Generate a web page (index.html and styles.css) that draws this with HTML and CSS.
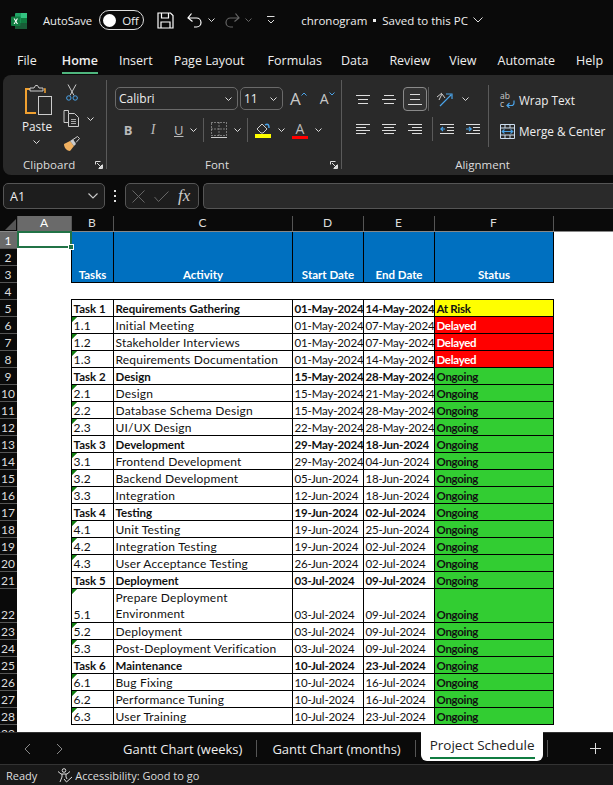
FILE: index.html
```html
<!DOCTYPE html>
<html lang="en">
<head>
<meta charset="utf-8">
<title>chronogram - Excel</title>
<link rel="stylesheet" href="styles.css">
</head>
<body>
<header class="titlebar">
  <svg class="logo" width="16" height="16" viewBox="0 0 16 16"><rect x="4" y="0" width="12" height="16" rx="1" fill="#21a366"/><rect x="10" y="0" width="6" height="5" fill="#33c481"/><rect x="10" y="5" width="6" height="5" fill="#107c41"/><rect x="4" y="10" width="12" height="6" fill="#185c37"/><rect x="0" y="3.5" width="9.5" height="9.5" rx="1" fill="#107c41"/><path d="M2.6 5.6h1.2l1 1.7 1-1.7H7L5.5 8.2 7 10.9H5.8l-1-1.8-1 1.8H2.6l1.600-2.700z" fill="#fff"/></svg>
  <span class="autosave">AutoSave</span>
  <span class="toggle"><i class="knob"></i><span>Off</span></span>
  <svg class="ico save" width="17" height="17" viewBox="0 0 17 17" fill="none" stroke="#fff" stroke-width="1.200"><path d="M1 1h12.500L16 3.500V16H1z"/><path d="M4.500 1v5h7V1M4 16v-6h9v6"/></svg>
  <svg class="ico undo" width="15" height="17" viewBox="0 0 15 17" fill="none" stroke="#fff" stroke-width="1.200"><path d="M1 6h8.500a4.500 4.500 0 0 1 0 9H7M4.500 1.500 1 6l4.500 3.500"/></svg>
  <svg class="chev c-undo" width="7" height="4" viewBox="0 0 7 4"><path d="M.5.5l3 3 3-3" fill="none" stroke="#ddd"/></svg>
  <svg class="ico redo" width="15" height="17" viewBox="0 0 15 17" fill="none" stroke="#666" stroke-width="1.200"><path d="M14 6H5.500a4.500 4.500 0 0 0 0 9H8M10.500 1.500 14 6l-4.500 3.500"/></svg>
  <svg class="chev c-redo" width="7" height="4" viewBox="0 0 7 4"><path d="M.5.5l3 3 3-3" fill="none" stroke="#666"/></svg>
  <svg class="ico custom" width="8" height="8" viewBox="0 0 8 8" fill="none" stroke="#ddd"><path d="M0 .5h7.500M1 4l3 3 3-3"/></svg>
  <span class="doc">chronogram</span><i class="dot"></i><span class="saved">Saved to this PC</span>
  <svg class="chev c-doc" width="10" height="6" viewBox="0 0 10 6"><path d="M.5.5l4.500 4.500L9.500.5" fill="none" stroke="#ddd"/></svg>
</header>

<nav class="menu">
  <span class="m-file">File</span><span class="on">Home</span><span>Insert</span><span class="m-page">Page Layout</span><span class="m-form">Formulas</span><span>Data</span><span class="m-rev">Review</span><span>View</span><span class="m-view">Automate</span><span>Help</span>
</nav>

<section class="ribbon">
  <div class="grp g-clip">
    <div class="body clip-body">
      <div class="paste">
        <svg width="28" height="32" viewBox="0 0 28 32" fill="none"><path d="M8 5H1v24h10" stroke="#f0a030" stroke-width="2"/><path d="M19 5h1v4" stroke="#f0a030" stroke-width="1.500"/><path d="M5 7V4h4l1.500-2.500h2L14 4h4v3z" stroke="#ccc" fill="#292929"/><rect x="13.500" y="12.500" width="13" height="18" stroke="#ccc" fill="#292929"/></svg>
        <span>Paste</span>
        <svg class="small-chev" width="7" height="4" viewBox="0 0 7 4"><path d="M.5.5l3 3 3-3" fill="none" stroke="#ddd"/></svg>
      </div>
      <div class="tools">
        <svg width="12" height="17" viewBox="0 0 12 17" fill="none"><path d="M2 .5l6 11M10 .5l-6 11" stroke="#ccc"/><circle cx="2.800" cy="14" r="2.200" stroke="#4aa3e8"/><circle cx="9.200" cy="14" r="2.200" stroke="#4aa3e8"/></svg>
        <span class="copy"><svg width="17" height="17" viewBox="0 0 17 17" fill="none" stroke="#ccc"><path d="M5.500 3V.5H1v12h4.500"/><path d="M5.500 3.500h6l4 4v9h-10z"/><path d="M8 9.500h5M8 11.500h5M8 13.500h5" stroke-width=".8"/></svg><svg width="7" height="4" viewBox="0 0 7 4"><path d="M.5.5l3 3 3-3" fill="none" stroke="#ddd"/></svg></span>
        <svg width="17" height="16" viewBox="0 0 17 16"><path d="M1 8l6-3 4 5-4 5c-3 0-6-3-6-7z" fill="#f0b060"/><path d="M7 5l3-2 3 5-2 2z" fill="#ccc"/><path d="M10 3.500l4.500-3 2 2-3.500 4" fill="none" stroke="#ccc"/></svg>
      </div>
    </div>
    <div class="label"><span>Clipboard</span>
      <svg class="launch" width="8" height="8" viewBox="0 0 8 8" fill="none" stroke="#ddd"><path d="M7.500 3.500v4h-4M.5 3.500v-3h5M2 2l4.500 4.500M4 6.500h2.500V4"/></svg></div>
  </div>

  <div class="grp g-font">
    <div class="body font-body">
      <div class="frow r1">
        <div class="box fname"><span>Calibri</span><svg width="7" height="4" viewBox="0 0 7 4"><path d="M.5.5l3 3 3-3" fill="none" stroke="#ddd"/></svg></div>
        <div class="box fsize"><span>11</span><svg width="7" height="4" viewBox="0 0 7 4"><path d="M.5.5l3 3 3-3" fill="none" stroke="#ddd"/></svg></div>
        <span class="grow">A<svg width="6" height="4" viewBox="0 0 6 4"><path d="M.5 3.500L3 1l2.500 2.500" fill="none" stroke="#4aa3e8"/></svg></span>
        <span class="shrink">A<svg width="6" height="4" viewBox="0 0 6 4"><path d="M.5.5L3 3 5.500.5" fill="none" stroke="#4aa3e8"/></svg></span>
      </div>
      <div class="frow r2">
        <b class="fb">B</b><i class="fi">I</i><u class="fu">U</u>
        <svg class="chv" width="7" height="4" viewBox="0 0 7 4"><path d="M.5.5l3 3 3-3" fill="none" stroke="#ddd"/></svg>
        <i class="sep"></i>
        <svg width="16" height="16" viewBox="0 0 16 16" fill="none" stroke="#ccc"><path d="M.5 .5h15v13H.5zM8 .5v13M.5 7h15" stroke-dasharray="1 2"/><path d="M0 15.500h16"/></svg>
        <svg class="chv" width="7" height="4" viewBox="0 0 7 4"><path d="M.5.5l3 3 3-3" fill="none" stroke="#ddd"/></svg>
        <i class="sep"></i>
        <svg width="16" height="16" viewBox="0 0 16 16"><path d="M2 7l5-5 5 5-4 4H6z" fill="none" stroke="#ccc"/><path d="M10 3c3-2 4 0 4 3" fill="none" stroke="#4aa3e8" stroke-width="1.500"/><rect y="12" width="16" height="4" fill="#ff0"/></svg>
        <svg class="chv" width="7" height="4" viewBox="0 0 7 4"><path d="M.5.5l3 3 3-3" fill="none" stroke="#ddd"/></svg>
        <span class="fcolor">A</span>
        <svg class="chv" width="7" height="4" viewBox="0 0 7 4"><path d="M.5.5l3 3 3-3" fill="none" stroke="#ddd"/></svg>
      </div>
    </div>
    <div class="label l-font"><span>Font</span>
      <svg class="launch" width="8" height="8" viewBox="0 0 8 8" fill="none" stroke="#ddd"><path d="M7.500 3.500v4h-4M.5 3.500v-3h5M2 2l4.500 4.500M4 6.500h2.500V4"/></svg></div>
  </div>

  <div class="grp g-align">
    <div class="body align-body">
      <div class="aligns">
        <div class="arow">
          <svg width="14" height="9" viewBox="0 0 14 9" stroke="#ddd"><path d="M0 .5h14M2 4.500h10M2 8.500h10"/></svg>
          <svg width="14" height="9" viewBox="0 0 14 9" stroke="#ddd"><path d="M2 .5h10M0 4.500h14M2 8.500h10"/></svg>
          <span class="a-on"><svg width="14" height="11" viewBox="0 0 14 11" stroke="#ddd"><path d="M2 .5h10M2 5.500h10M0 10.500h14"/></svg></span>
          <i class="sep"></i>
          <svg width="17" height="16" viewBox="0 0 17 16" fill="none"><path d="M1 6l5-4M3 9l3-6 3 4" stroke="#ccc"/><path d="M4 15L15 4M10 3h6v5" stroke="#4aa3e8" stroke-width="1.200"/></svg>
          <svg class="chv" width="7" height="4" viewBox="0 0 7 4"><path d="M.5.5l3 3 3-3" fill="none" stroke="#ddd"/></svg>
        </div>
        <div class="arow">
          <svg width="14" height="11" viewBox="0 0 14 11" stroke="#ddd"><path d="M0 .5h14M0 3.500h10M0 6.500h14M0 9.500h10"/></svg>
          <svg width="14" height="11" viewBox="0 0 14 11" stroke="#ddd"><path d="M0 .5h14M2 3.500h10M0 6.500h14M2 9.500h10"/></svg>
          <svg class="a-r" width="14" height="11" viewBox="0 0 14 11" stroke="#ddd"><path d="M0 .5h14M4 3.500h10M0 6.500h14M4 9.500h10"/></svg>
          <i class="sep"></i>
          <svg width="14" height="11" viewBox="0 0 14 11" fill="none"><path d="M0 .5h14M7 3.500h7M7 6.500h7M0 9.500h14" stroke="#ddd"/><path d="M5 5H.5M3 3L.8 5 3 7" stroke="#4aa3e8" stroke-width="1.200"/></svg>
          <svg width="14" height="11" viewBox="0 0 14 11" fill="none"><path d="M0 .5h14M7 3.500h7M7 6.500h7M0 9.500h14" stroke="#ddd"/><path d="M0 5h5M3 3l2.200 2L3 7" stroke="#4aa3e8" stroke-width="1.200"/></svg>
        </div>
      </div>
      <i class="vr"></i>
      <div class="wraps">
        <div class="wline"><span class="wrapico"><span>ab</span><span>c</span><svg width="9" height="8" viewBox="0 0 9 8" fill="none"><path d="M8 .5v2.500a2.500 2.500 0 0 1-2.500 2.500H1M3.500 3L1 5.500 3.500 8" stroke="#4aa3e8" stroke-width="1.200"/></svg></span><span>Wrap Text</span></div>
        <div class="wline"><svg width="15" height="15" viewBox="0 0 15 15" fill="none"><path d="M.5.5h14v14H.5zM.5 4h14M.5 11h14" stroke="#cde"/><path d="M5 .5V4M10 .5V4M5 11v3.500M10 11v3.500" stroke="#cde"/><path d="M2 7.500h11M4.500 5.500l-2.300 2 2.300 2M10.500 5.500l2.300 2-2.300 2" stroke="#4aa3e8" stroke-width="1.100"/></svg><span>Merge &amp; Center</span></div>
      </div>
    </div>
    <div class="label l-align"><span>Alignment</span></div>
  </div>
</section>

<section class="fbar">
  <div class="fld namebox"><span>A1</span><svg width="10" height="6" viewBox="0 0 10 6"><path d="M.5.5l4.500 4.500L9.500.5" fill="none" stroke="#ccc" stroke-width="1.100"/></svg></div>
  <div class="dots"><i></i><i></i><i></i></div>
  <div class="fld fxbox">
    <svg width="13" height="13" viewBox="0 0 13 13"><path d="M.5.5l12 12M12.500.5l-12 12" stroke="#666"/></svg>
    <svg width="15" height="11" viewBox="0 0 15 11"><path d="M.5 6l4 4.500L14.500.5" fill="none" stroke="#666"/></svg>
    <span class="fx">fx</span>
  </div>
  <div class="fld finput"></div>
</section>

<main class="sheet">
<table class="grid">
  <colgroup><col class="w-h"><col class="w-a"><col class="w-b"><col class="w-c"><col class="w-d"><col class="w-e"><col class="w-f"><col class="w-g"></colgroup>
  <thead>
    <tr class="cols"><th class="corner"><svg width="11" height="11" viewBox="0 0 11 11"><path d="M11 0v11H0z" fill="#555"/></svg></th><th class="ch ch-on">A</th><th class="ch">B</th><th class="ch">C</th><th class="ch">D</th><th class="ch">E</th><th class="ch">F</th><th class="ch">G</th></tr>
  </thead>
  <tbody>
    <tr><th class="rh rh-on">1</th><td class="sel"><span class="cursor"><i class="handle"></i></span></td><td class="hd" rowspan="3">Tasks</td><td class="hd" rowspan="3">Activity</td><td class="hd" rowspan="3">Start Date</td><td class="hd" rowspan="3">End Date</td><td class="hd" rowspan="3">Status</td><td class="e"></td></tr>
    <tr><th class="rh">2</th><td class="e"></td><td class="e"></td></tr>
    <tr><th class="rh">3</th><td class="e"></td><td class="e"></td></tr>
    <tr><th class="rh">4</th><td class="e"></td><td class="e" colspan="5"></td><td class="e"></td></tr>
    <tr class="task"><th class="rh">5</th><td class="e"></td><td>Task 1</td><td>Requirements Gathering</td><td class="dt">01-May-2024</td><td class="dt">14-May-2024</td><td class="risk">At Risk</td><td class="e"></td></tr>
    <tr><th class="rh">6</th><td class="e"></td><td class="n">1.1</td><td>Initial Meeting</td><td class="dt">01-May-2024</td><td class="dt">07-May-2024</td><td class="late">Delayed</td><td class="e"></td></tr>
    <tr><th class="rh">7</th><td class="e"></td><td class="n">1.2</td><td>Stakeholder Interviews</td><td class="dt">01-May-2024</td><td class="dt">07-May-2024</td><td class="late">Delayed</td><td class="e"></td></tr>
    <tr><th class="rh">8</th><td class="e"></td><td class="n">1.3</td><td>Requirements Documentation</td><td class="dt">01-May-2024</td><td class="dt">14-May-2024</td><td class="late">Delayed</td><td class="e"></td></tr>
    <tr class="task"><th class="rh">9</th><td class="e"></td><td>Task 2</td><td>Design</td><td class="dt">15-May-2024</td><td class="dt">28-May-2024</td><td class="go">Ongoing</td><td class="e"></td></tr>
    <tr><th class="rh">10</th><td class="e"></td><td class="n">2.1</td><td>Design</td><td class="dt">15-May-2024</td><td class="dt">21-May-2024</td><td class="go">Ongoing</td><td class="e"></td></tr>
    <tr><th class="rh">11</th><td class="e"></td><td class="n">2.2</td><td>Database Schema Design</td><td class="dt">15-May-2024</td><td class="dt">28-May-2024</td><td class="go">Ongoing</td><td class="e"></td></tr>
    <tr><th class="rh">12</th><td class="e"></td><td class="n">2.3</td><td>UI/UX Design</td><td class="dt">22-May-2024</td><td class="dt">28-May-2024</td><td class="go">Ongoing</td><td class="e"></td></tr>
    <tr class="task"><th class="rh">13</th><td class="e"></td><td>Task 3</td><td>Development</td><td class="dt">29-May-2024</td><td class="dt">18-Jun-2024</td><td class="go">Ongoing</td><td class="e"></td></tr>
    <tr><th class="rh">14</th><td class="e"></td><td class="n">3.1</td><td>Frontend Development</td><td class="dt">29-May-2024</td><td class="dt">04-Jun-2024</td><td class="go">Ongoing</td><td class="e"></td></tr>
    <tr><th class="rh">15</th><td class="e"></td><td class="n">3.2</td><td>Backend Development</td><td class="dt">05-Jun-2024</td><td class="dt">18-Jun-2024</td><td class="go">Ongoing</td><td class="e"></td></tr>
    <tr><th class="rh">16</th><td class="e"></td><td class="n">3.3</td><td>Integration</td><td class="dt">12-Jun-2024</td><td class="dt">18-Jun-2024</td><td class="go">Ongoing</td><td class="e"></td></tr>
    <tr class="task"><th class="rh">17</th><td class="e"></td><td>Task 4</td><td>Testing</td><td class="dt">19-Jun-2024</td><td class="dt">02-Jul-2024</td><td class="go">Ongoing</td><td class="e"></td></tr>
    <tr><th class="rh">18</th><td class="e"></td><td class="n">4.1</td><td>Unit Testing</td><td class="dt">19-Jun-2024</td><td class="dt">25-Jun-2024</td><td class="go">Ongoing</td><td class="e"></td></tr>
    <tr><th class="rh">19</th><td class="e"></td><td class="n">4.2</td><td>Integration Testing</td><td class="dt">19-Jun-2024</td><td class="dt">02-Jul-2024</td><td class="go">Ongoing</td><td class="e"></td></tr>
    <tr><th class="rh">20</th><td class="e"></td><td class="n">4.3</td><td>User Acceptance Testing</td><td class="dt">26-Jun-2024</td><td class="dt">02-Jul-2024</td><td class="go">Ongoing</td><td class="e"></td></tr>
    <tr class="task"><th class="rh">21</th><td class="e"></td><td>Task 5</td><td>Deployment</td><td class="dt">03-Jul-2024</td><td class="dt">09-Jul-2024</td><td class="go">Ongoing</td><td class="e"></td></tr>
    <tr class="tall"><th class="rh">22</th><td class="e"></td><td class="n">5.1</td><td class="wrapc">Prepare Deployment<br>Environment</td><td class="dt">03-Jul-2024</td><td class="dt">09-Jul-2024</td><td class="go">Ongoing</td><td class="e"></td></tr>
    <tr><th class="rh">23</th><td class="e"></td><td class="n">5.2</td><td>Deployment</td><td class="dt">03-Jul-2024</td><td class="dt">09-Jul-2024</td><td class="go">Ongoing</td><td class="e"></td></tr>
    <tr><th class="rh">24</th><td class="e"></td><td class="n">5.3</td><td>Post-Deployment Verification</td><td class="dt">03-Jul-2024</td><td class="dt">09-Jul-2024</td><td class="go">Ongoing</td><td class="e"></td></tr>
    <tr class="task"><th class="rh">25</th><td class="e"></td><td>Task 6</td><td>Maintenance</td><td class="dt">10-Jul-2024</td><td class="dt">23-Jul-2024</td><td class="go">Ongoing</td><td class="e"></td></tr>
    <tr><th class="rh">26</th><td class="e"></td><td class="n">6.1</td><td>Bug Fixing</td><td class="dt">10-Jul-2024</td><td class="dt">16-Jul-2024</td><td class="go">Ongoing</td><td class="e"></td></tr>
    <tr><th class="rh">27</th><td class="e"></td><td class="n">6.2</td><td>Performance Tuning</td><td class="dt">10-Jul-2024</td><td class="dt">16-Jul-2024</td><td class="go">Ongoing</td><td class="e"></td></tr>
    <tr><th class="rh">28</th><td class="e"></td><td class="n">6.3</td><td>User Training</td><td class="dt">10-Jul-2024</td><td class="dt">23-Jul-2024</td><td class="go">Ongoing</td><td class="e"></td></tr>
    <tr><th class="rh">29</th><td class="e" colspan="7"></td></tr>
  </tbody>
</table>
</main>

<footer class="tabbar">
  <svg class="nav n-l" width="7" height="12" viewBox="0 0 7 12"><path d="M6 1L1 6l5 5" fill="none" stroke="#888"/></svg>
  <svg class="nav n-r" width="7" height="12" viewBox="0 0 7 12"><path d="M1 1l5 5-5 5" fill="none" stroke="#888"/></svg>
  <span class="tab t1">Gantt Chart (weeks)</span><i class="tsep"></i>
  <span class="tab t2">Gantt Chart (months)</span><i class="tsep"></i>
  <span class="tab active"><span>Project Schedule</span></span><i class="tsep"></i>
  <svg class="plus" width="11" height="11" viewBox="0 0 11 11"><path d="M5.500 0v11M0 5.500h11" stroke="#ddd"/></svg>
</footer>
<footer class="status">
  <span class="ready">Ready</span>
  <svg width="16" height="15" viewBox="0 0 16 15" fill="none" stroke="#ddd"><circle cx="7" cy="2.500" r="1.800"/><path d="M1 3.500l3 2.500h6l3-2.500M5 6v3L3 14M9 6v3l1 2M7 11l2.500 3L15 9"/></svg>
  <span class="acc">Accessibility: Good to go</span>
</footer>
</body>
</html>
```
FILE: styles.css
```css
* { box-sizing: border-box; }
html, body { margin: 0; height: 100%; }
body {
  width: 613px; height: 785px; overflow: hidden;
  background: #0a0a0a; color: #eee;
  font-family: "Open Sans", "Noto Sans", sans-serif;
  font-size: 12.5px;
  display: flex; flex-direction: column;
}
i { font-style: normal; }

/* title bar */
.titlebar { height: 40px; flex: none; display: flex; align-items: center; padding-left: 11px; }
.logo { margin-top: 1px; }
.autosave { margin-left: 16px; font-size: 11.250px; }
.toggle {
  margin-left: 7px; width: 45px; height: 20px; border: 1px solid #ddd; border-radius: 10px;
  display: flex; align-items: center; padding-left: 3px; gap: 6px; font-size: 11.500px;
}
.knob { width: 13px; height: 13px; border-radius: 50%; background: #fff; }
.save { margin-left: 13px; }
.undo { margin-left: 13px; }
.c-undo { margin-left: 6px; }
.redo { margin-left: 10px; }
.c-redo { margin-left: 5px; }
.custom { margin-left: 15px; }
.doc { margin-left: 26px; font-size: 11.500px; }
.dot { width: 3px; height: 3px; background: #eee; margin-left: 6px; }
.saved { margin-left: 6px; font-size: 11.500px; }
.c-doc { margin-left: 5px; }

/* menu */
.menu { height: 35px; flex: none; display: flex; align-items: flex-start; padding: 12px 0 0 17px; gap: 21px; font-size: 12.500px; }
.menu .m-file { margin-right: 4px; }
.menu .m-page { margin-right: 2px; }
.menu .m-form { margin-right: -2px; }
.menu .m-rev { margin-left: 0; margin-right: -2px; }
.menu .on { font-weight: 600; padding-bottom: 3px; border-bottom: 2px solid #4fb67e; }

/* ribbon */
.ribbon {
  flex: none; height: 100px; margin-left: 3px; background: #292929; border-radius: 8px 0 0 8px;
  display: flex; padding-top: 5px; overflow: hidden;
}
.grp { display: flex; flex-direction: column; border-right: 1px solid #5a5a5a; height: 89px; }
.g-clip { width: 104px; }
.g-font { width: 235px; }
.g-align { border-right: 0; flex: 1; }
.body { height: 77px; flex: none; }
.label { height: 17px; display: flex; align-items: center; justify-content: center; position: relative; font-size: 11.500px; color: #ddd; }
.g-clip .label { justify-content: flex-start; padding-left: 20px; }
.l-font { padding-right: 14px; }
.l-align { padding-left: 10px; }
.launch { position: absolute; right: 3px; top: 4px; }

.clip-body { display: flex; padding-top: 4px; }
.paste { width: 54px; padding-left: 22px; display: flex; flex-direction: column; align-items: flex-start; }
.paste span { margin: 2px 0 0 -3px; font-size: 11.750px; line-height: 16px; }
.small-chev { margin: 6px 0 0 8px; }
.tools { display: flex; flex-direction: column; align-items: flex-start; gap: 9px; margin-left: 6px; }
.tools > svg:first-child { margin-left: 3px; }
.copy { display: flex; align-items: center; gap: 7px; }

.font-body { padding: 7px 0 0 8px; }
.frow { display: flex; align-items: center; }
.r1 { height: 23px; }
.box { height: 23px; border: 1px solid #6a6a6a; border-radius: 5px; display: flex; align-items: center; justify-content: space-between; padding: 0 5px 0 3px; font-size: 12px; background: #292929; }
.fname { width: 123px; }
.fsize { width: 43px; margin-left: 2px; }
.grow, .shrink { display: flex; color: #c8c8c8; align-items: flex-start; line-height: 18px; }
.grow { margin-left: 7px; font-size: 17px; }
.grow svg, .shrink svg { margin-top: 2px; }
.shrink { margin-left: 13px; font-size: 14px; }
.r2 { margin-top: 8px; height: 24px; padding-left: 8px; }
.fb, .fi, .fu { color: #bbb; font-size: 13px; text-align: center; }
.fb { width: 10px; }
.fi { margin-left: 16px; width: 8px; font-family: "Liberation Serif", serif; font-size: 14px; font-style: italic; }
.fu { margin-left: 17px; width: 9px; }
.chv { margin-left: 7px; flex: none; }
.sep { width: 1px; height: 24px; background: #5a5a5a; margin: 0 7px 0 6px; flex: none; }
.fcolor { margin-left: 7px; width: 16px; text-align: center; color: #bbb; font-size: 14px; line-height: 15px; border-bottom: 3px solid #f00; }

.align-body { display: flex; }
.aligns { padding: 7px 0 0 14px; width: 146px; }
.arow { display: flex; align-items: center; gap: 12px; height: 24px; }
.arow + .arow { margin-top: 6px; }
.a-on { margin-left: -5px; width: 24px; height: 24px; border: 1px solid #8a8a8a; border-radius: 4px; display: flex; align-items: center; justify-content: center; background: #333; }
.arow .sep { margin: 0 -5px 0 -10px; }
.arow .a-on + .sep { margin-left: -11px; margin-right: -5px; }
.a-r { margin-right: 8px; }
.arow .chv { margin-left: -3px; }
.vr { width: 1px; height: 62px; background: #5a5a5a; margin-top: 5px; flex: none; }
.wraps { padding: 9px 0 0 11px; white-space: nowrap; }
.wline { display: flex; align-items: center; gap: 4px; height: 22px; font-size: 11.750px; }
.wline + .wline { margin-top: 9px; }
.wrapico { width: 15px; height: 16px; position: relative; display: flex; flex-direction: column; font-size: 8.500px; line-height: 8px; color: #ccc; }
.wrapico svg { position: absolute; right: 0; bottom: 0; }

/* formula bar */
.fbar { flex: none; height: 41px; padding: 8px 0 7px 3px; display: flex; gap: 4px; }
.fld { height: 26px; border: 1px solid #555; border-radius: 5px; }
.namebox { width: 102px; display: flex; align-items: center; justify-content: space-between; padding: 0 6px; font-size: 12.500px; background: #1d1d1d; }
.dots { width: 12px; display: flex; flex-direction: column; align-items: center; justify-content: center; gap: 3px; }
.dots i { width: 2px; height: 2px; background: #ddd; }
.fxbox { width: 74px; display: flex; align-items: center; padding-left: 6px; gap: 9px; background: #1d1d1d; }
.fx { font-family: "Liberation Serif", serif; font-style: italic; font-size: 17px; color: #ccc; }
.finput { flex: 1; background: #2a2a2a; border-right: 0; border-radius: 5px 0 0 5px; }

/* sheet */
.sheet { flex: none; height: 516px; overflow: hidden; background: #fff; }
.grid { border-collapse: collapse; table-layout: fixed; width: 791px; font-family: Lato, "Liberation Sans", sans-serif; font-size: 12px; color: #111; margin-left: -1px; }
.w-h { width: 18px; } .w-a { width: 54px; } .w-b { width: 42px; } .w-c { width: 179px; }
.w-d { width: 71px; } .w-e { width: 71px; } .w-f { width: 119px; } .w-g { width: 237px; }
tr { height: 17px; }
.tall { height: 34px; }
.cols { height: 15px; }
th { font-weight: 400; background: #0a0a0a; color: #ddd; padding: 0; line-height: 14px; }
.corner { text-align: right; vertical-align: bottom; padding: 0 1px 1px 0; border-bottom: 1px solid #888; }
.corner svg { display: block; margin-left: auto; }
.ch { border-left: 1px solid #555; border-bottom: 1px solid #888; }
.ch-on { background: #6a6a6a; color: #fff; }
.rh { vertical-align: bottom; border-bottom: 1px solid #555; font-size: 12px; }
.rh-on { background: #6a6a6a; color: #fff; }
td {
  padding: 0 1px 0 2px; border: 1px solid #000; line-height: 15px; vertical-align: bottom;
  white-space: nowrap; overflow: hidden; letter-spacing: .2px;
}
td.e { border: 0; }
td.sel { border: 0; position: relative; overflow: visible; }
.cursor { position: absolute; left: 0; right: -1px; top: -1px; bottom: 0; border: 2px solid #217346; }
.handle { position: absolute; right: -4px; bottom: -4px; width: 6px; height: 6px; background: #217346; border: 1px solid #fff; }
.hd { background: #0070c0; color: #fff; font-weight: 700; text-align: center; font-size: 11.500px; letter-spacing: 0; }
.dt { font-size: 11.500px; letter-spacing: -.15px; }
.wrapc { line-height: 16px; }
.task td { font-weight: 700; font-size: 11.500px; letter-spacing: 0; }
.task td.dt { letter-spacing: -.2px; }
.task td.e { font-weight: 400; }
.n { background: linear-gradient(135deg, #107c10 3.500px, transparent 3.600px) no-repeat 0 0 / 6px 6px; }
td.risk, td.late, td.go { font-weight: 700; font-size: 11.500px; letter-spacing: -.3px; }
.risk { background: #ff0; }
.late { background: #f00; color: #fff; }
.go { background: #32cd32; }

/* sheet tabs */
.tabbar { flex: none; height: 32px; display: flex; align-items: center; padding-left: 24px; border-top: 1px solid #333; position: relative; font-size: 13px; background: #0a0a0a; }
.n-l { margin-right: 25px; }
.n-r { margin-right: 60px; }
.tab { white-space: nowrap; color: #eee; }
.tsep { width: 1px; height: 17px; background: #555; margin: 0 15px 0 14px; flex: none; }
.active { align-self: flex-start; margin: -1px 0 0 -10px; height: 29px; width: 122px; background: #fff; color: #222; border-radius: 0 0 6px 6px; padding: 4px 8px 0 9px; display: block; font-size: 13.500px; }
.active span { display: block; line-height: 18px; border-bottom: 2px solid #107c41; padding-bottom: 3px; white-space: nowrap; }
.active + .tsep { margin: 0 0 0 4px; }
.plus { margin-left: 42px; }

/* status */
.status { flex: none; height: 21px; background: #181818; border-top: 1px solid #333; display: flex; align-items: center; padding-left: 6px; font-size: 11px; color: #ddd; }
.ready { margin-right: 20px; }
.acc { margin-left: 2px; }
```
